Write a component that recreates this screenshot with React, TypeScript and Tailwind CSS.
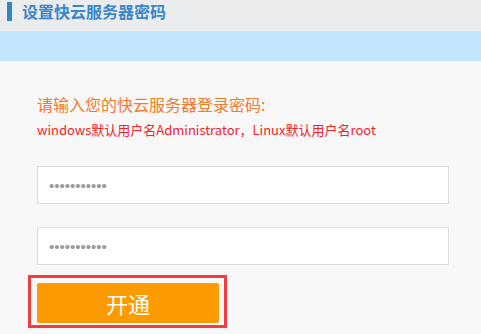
import React from 'react';

const font = { fontFamily: '"Noto Sans CJK SC", "Open Sans", sans-serif' };

export default function App() {
  return (
    <div className="w-[481px] h-[334px] bg-[#f8f8f8] overflow-hidden" style={font}>
      <div className="h-[31px] bg-[#ebecee] flex items-start pt-[2px] pl-[7px]">
        <span className="w-[5px] h-[19px] bg-[#3385c6]" />
        <h2 className="ml-[10px] text-[16px] leading-[19px] font-bold text-[#3a86c8]">设置快云服务器密码</h2>
      </div>
      <div className="h-[30px] bg-[#c2e6fe]" />
      <div className="pl-[37px] pr-[32px] pt-[33px]">
        <p className="text-[16px] leading-[21px] text-[#f5792a]">请输入您的快云服务器登录密码:</p>
        <p className="mt-[6px] text-[13px] leading-[18px] text-[#f0242a]">windows默认用户名Administrator，Linux默认用户名root</p>
        <div className="mt-[27px] flex flex-col gap-[23px]">
          <input type="password" defaultValue="12345678901" readOnly
            className="h-[38px] w-full bg-white border border-[#dcdcdc] px-[11px] text-[15px] text-[#9a9a9a] outline-none font-['Liberation_Sans']" />
          <input type="password" defaultValue="12345678901" readOnly
            className="h-[38px] w-full bg-white border border-[#dcdcdc] px-[11px] text-[15px] text-[#9a9a9a] outline-none font-['Liberation_Sans']" />
        </div>
      </div>
      <div className="ml-[28px] mt-[10px] w-[199px] h-[53px] border-[3px] border-[#f23d3d] px-[6px] pt-[5px]">
        <button className="w-[182px] h-[40px] rounded-[2px] bg-[#fb9b00] text-white text-[22px] leading-[40px]">开通</button>
      </div>
    </div>
  );
}
